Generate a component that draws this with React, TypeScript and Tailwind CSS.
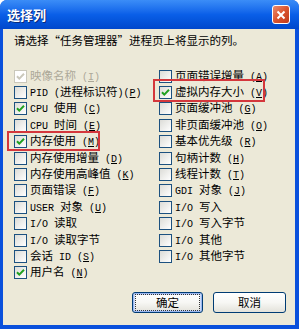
import React from "react";

type Item = { text: string; acc?: string; sep?: string; checked?: boolean; disabled?: boolean };

const leftItems: Item[] = [
  { text: "映像名称", acc: "I", sep: " ", checked: true, disabled: true },
  { text: "PID (进程标识符)", acc: "P", sep: "" },
  { text: "CPU 使用", acc: "C", sep: " ", checked: true },
  { text: "CPU 时间", acc: "E", sep: " " },
  { text: "内存使用", acc: "M", sep: " ", checked: true },
  { text: "内存使用增量", acc: "D", sep: " " },
  { text: "内存使用高峰值", acc: "K", sep: " " },
  { text: "页面错误", acc: "F", sep: " " },
  { text: "USER 对象", acc: "U", sep: " " },
  { text: "I/O 读取" },
  { text: "I/O 读取字节" },
  { text: "会话 ID", acc: "S", sep: " " },
  { text: "用户名", acc: "N", sep: " ", checked: true },
];

const rightItems: Item[] = [
  { text: "页面错误增量", acc: "A", sep: " " },
  { text: "虚拟内存大小", acc: "V", sep: " ", checked: true },
  { text: "页面缓冲池", acc: "G", sep: " " },
  { text: "非页面缓冲池", acc: "O", sep: " " },
  { text: "基本优先级", acc: "R", sep: " " },
  { text: "句柄计数", acc: "H", sep: " " },
  { text: "线程计数", acc: "T", sep: " " },
  { text: "GDI 对象", acc: "J", sep: " " },
  { text: "I/O 写入" },
  { text: "I/O 写入字节" },
  { text: "I/O 其他" },
  { text: "I/O 其他字节" },
];

// ascii runs get the narrow mono face, like SimSun half-width glyphs
const Runs = ({ text }: { text: string }) => (
  <>
    {(text.match(/[\x00-\x7f]+|[^\x00-\x7f]+/g) ?? []).map((run, i) =>
      /^[\x00-\x7f]/.test(run) ? (
        <span key={i} className="whitespace-pre font-['Liberation_Mono',monospace] text-[10px]">
          {run}
        </span>
      ) : (
        <span key={i}>{run}</span>
      ),
    )}
  </>
);

const CheckBox = ({ checked, disabled }: { checked?: boolean; disabled?: boolean }) => (
  <span
    className={`flex h-[13px] w-[13px] shrink-0 items-center justify-center border ${
      disabled ? "border-[#cac8bb] bg-white" : "border-[#1c5180] bg-linear-to-br from-[#dcdcd7] to-white"
    }`}
  >
    {checked && (
      <svg width="11" height="11" viewBox="0 0 11 11">
        <path
          d="M2 5.2 L4.3 7.6 L9 2.8"
          fill="none"
          stroke={disabled ? "#cac8bb" : "#21a121"}
          strokeWidth="2"
        />
      </svg>
    )}
  </span>
);

const Row = ({ item }: { item: Item }) => (
  <div className="flex h-[16.4px] items-center gap-[3px]">
    <CheckBox checked={item.checked} disabled={item.disabled} />
    <span className={`whitespace-nowrap leading-[14px] ${item.disabled ? "text-[#aca899]" : "text-black"}`}>
      <Runs text={item.text} />
      {item.acc && (
        <>
          <Runs text={`${item.sep}(`} />
          <span className="whitespace-pre font-['Liberation_Mono',monospace] text-[10px] underline">{item.acc}</span>
          <Runs text=")" />
        </>
      )}
    </span>
  </div>
);

const Button = ({ label, primary }: { label: string; primary?: boolean }) => (
  <button
    className={`flex h-[21px] items-center justify-center rounded-[3px] border border-[#003c74] bg-linear-to-b from-white via-[#f7f7f4] to-[#e3e2da] text-[11.5px] text-black ${
      primary ? "w-[71px] shadow-[inset_0_0_0_1px_#9bb7f0,inset_0_0_0_2px_#cddcf8]" : "w-[73px]"
    }`}
  >
    {primary ? (
      <span className="flex h-[15px] w-[63px] items-center justify-center outline-1 outline-dotted outline-[#333]">{label}</span>
    ) : (
      label
    )}
  </button>
);

export default function App() {
  return (
    <div className="relative h-[329px] w-[299px] bg-white font-['Noto_Sans_CJK_SC',sans-serif] text-[11.5px]">
      <div className="flex h-full flex-col overflow-hidden rounded-t-[7px] bg-[#0a50dc]">
        <div className="flex h-[29px] shrink-0 items-center justify-between bg-linear-to-b from-[#3b8df7] via-[#0a5fe8] to-[#0047cc] pl-[7px] pr-[9px]">
          <span className="text-[13px] font-bold text-white [text-shadow:1px_1px_0_#0a2a7a]">选择列</span>
          <span className="flex h-[19px] w-[18px] items-center justify-center rounded-[3px] border border-white bg-linear-to-br from-[#e98a6c] via-[#d9532f] to-[#c0391a]">
            <svg width="10" height="10" viewBox="0 0 10 10">
              <path d="M1.5 1.5 L8.5 8.5 M8.5 1.5 L1.5 8.5" stroke="white" strokeWidth="2" />
            </svg>
          </span>
        </div>
        <div className="mb-[4px] ml-[3px] mr-[4px] flex flex-1 flex-col bg-[#ece9d8] pl-[11px] pt-[4px]">
          <div className="leading-[14px] text-black">请选择“任务管理器”进程页上将显示的列。</div>
          <div className="mt-[21px] flex">
            <div className="w-[145px]">
              {leftItems.map((item) => (
                <Row key={item.text} item={item} />
              ))}
            </div>
            <div>
              {rightItems.map((item) => (
                <Row key={item.text} item={item} />
              ))}
            </div>
          </div>
          <div className="mt-auto mb-[12px] flex justify-end gap-[10px] pr-[9px]">
            <Button label="确定" primary />
            <Button label="取消" />
          </div>
        </div>
      </div>
      <div className="absolute left-[7px] top-[131px] h-[20px] w-[93px] border-2 border-[#d4373c]" />
      <div className="absolute left-[153px] top-[79px] h-[23px] w-[112px] border-2 border-[#d4373c]" />
    </div>
  );
}
